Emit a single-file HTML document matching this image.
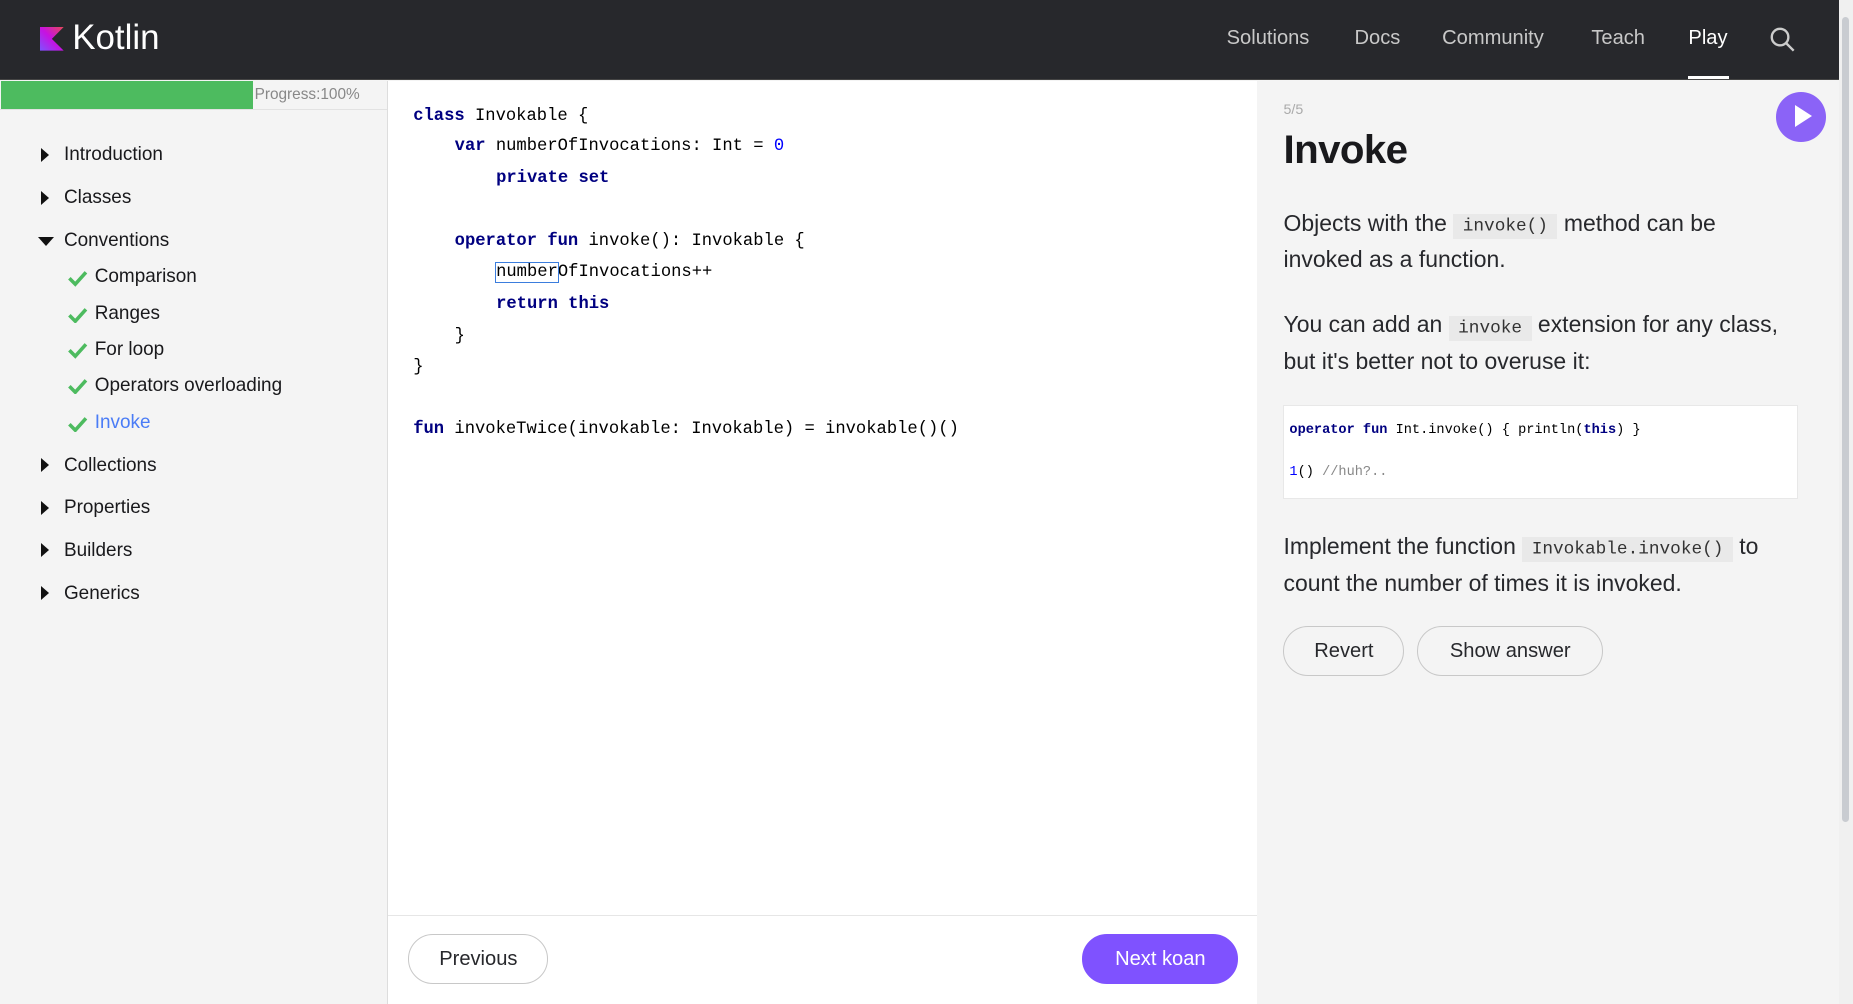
<!DOCTYPE html>
<html><head><meta charset="utf-8"><style>
html,body{margin:0;padding:0;overflow:hidden;background:#f4f4f4}
#z{zoom:1.18403;width:1565px;height:848px;position:relative;font-family:"Liberation Sans",sans-serif;overflow:hidden}
.a{position:absolute;white-space:pre}
.hdr{left:0;top:0;width:1553px;height:67px;background:#27282c;border-bottom:1px solid #444}
.nav{top:23px;font-size:17px;color:#c8c8c8}
.side{left:0;top:68px;width:327px;height:780px;background:#f4f4f4;border-right:1px solid #ddd}
.ti{font-size:16px;color:#19191c;left:54px}
.tri{left:35px;width:0;height:0;border-top:6px solid transparent;border-bottom:6px solid transparent;border-left:7px solid #111}
.ci{font-size:16px;color:#19191c;left:80px}
.code{font-family:"Liberation Mono",monospace;font-size:14.5px;color:#000;left:349px}
.k{color:#000080;font-weight:bold}
.p{font-size:19.4px;color:#27282c;left:1084px}
.ic{font-family:"Liberation Mono",monospace;font-size:15px;background:#e9e9e9;padding:2px 8px;color:#333}
.btn{border:1px solid #c8c8c8;border-radius:21px;height:40px;line-height:40px;text-align:center;font-size:17px;color:#27282c;box-sizing:border-box}
</style></head><body><div id="z">
<div class="a hdr"></div>
<svg class="a" style="left:34px;top:23px" width="20" height="20" viewBox="0 0 20 20"><defs><linearGradient id="g" x1="0" y1="1" x2="1" y2="0"><stop offset="0" stop-color="#7f52ff"/><stop offset=".5" stop-color="#c711e1"/><stop offset="1" stop-color="#e54857"/></linearGradient></defs><path d="M0 0H20L10 10L20 20H0Z" fill="url(#g)"/></svg>
<div class="a" style="left:61px;top:15px;font-size:29.5px;color:#fff">Kotlin</div>
<div class="a nav" style="left:1036px">Solutions</div>
<div class="a nav" style="left:1144px">Docs</div>
<div class="a nav" style="left:1218px">Community</div>
<div class="a nav" style="left:1344px">Teach</div>
<div class="a nav" style="left:1426px;color:#fff">Play</div>
<div class="a" style="left:1426px;top:64px;width:34px;height:3px;background:#fff"></div>
<svg class="a" style="left:1495px;top:23px" width="22" height="22" viewBox="0 0 22 22"><circle cx="8.5" cy="8.5" r="7" fill="none" stroke="#ccc" stroke-width="2"/><path d="M13.5 13.5L20 20" stroke="#ccc" stroke-width="2"/></svg>
<div class="a" style="left:1553px;top:0;width:12px;height:848px;background:#f0f0f0"></div>
<div class="a" style="left:1556px;top:14px;width:6px;height:680px;background:#c9ccd1;border-radius:3px"></div>

<div class="a side"></div>
<div class="a" style="left:1px;top:68px;width:213px;height:24px;background:#4dbb5f"></div>
<div class="a" style="left:215px;top:73px;font-size:13px;color:#888">Progress:100%</div>
<div class="a" style="left:0;top:92px;width:327px;height:1px;background:#e2e2e2"></div>

<div class="a tri" style="top:125px"></div><div class="a ti" style="top:122px">Introduction</div>
<div class="a tri" style="top:161px"></div><div class="a ti" style="top:158px">Classes</div>
<div class="a" style="left:32px;top:200px;width:0;height:0;border-left:7px solid transparent;border-right:7px solid transparent;border-top:8px solid #111"></div><div class="a ti" style="top:194px">Conventions</div>
<svg class="a" style="left:57px;top:228px" width="18" height="14"><path d="M2 7L7 12L16 2" fill="none" stroke="#4dbb5f" stroke-width="3"/></svg><div class="a ci" style="top:225px">Comparison</div>
<svg class="a" style="left:57px;top:259px" width="18" height="14"><path d="M2 7L7 12L16 2" fill="none" stroke="#4dbb5f" stroke-width="3"/></svg><div class="a ci" style="top:256px">Ranges</div>
<svg class="a" style="left:57px;top:289px" width="18" height="14"><path d="M2 7L7 12L16 2" fill="none" stroke="#4dbb5f" stroke-width="3"/></svg><div class="a ci" style="top:286px">For loop</div>
<svg class="a" style="left:57px;top:319px" width="18" height="14"><path d="M2 7L7 12L16 2" fill="none" stroke="#4dbb5f" stroke-width="3"/></svg><div class="a ci" style="top:317px">Operators overloading</div>
<svg class="a" style="left:57px;top:351px" width="18" height="14"><path d="M2 7L7 12L16 2" fill="none" stroke="#4dbb5f" stroke-width="3"/></svg><div class="a ci" style="top:348px;color:#4a7cf6">Invoke</div>
<div class="a tri" style="top:387px"></div><div class="a ti" style="top:384px">Collections</div>
<div class="a tri" style="top:423px"></div><div class="a ti" style="top:420px">Properties</div>
<div class="a tri" style="top:459px"></div><div class="a ti" style="top:456px">Builders</div>
<div class="a tri" style="top:495px"></div><div class="a ti" style="top:492px">Generics</div>

<div class="a" style="left:328px;top:68px;width:734px;height:780px;background:#fff"></div>
<div class="a code" style="top:90px"><span class="k">class</span> Invokable {</div>
<div class="a code" style="top:116px;left:384px"><span class="k">var</span> numberOfInvocations: Int = <span style="color:#00f">0</span></div>
<div class="a code" style="top:143px;left:419px"><span class="k">private set</span></div>
<div class="a code" style="top:196px;left:384px"><span class="k">operator fun</span> invoke(): Invokable {</div>
<div class="a code" style="top:222px;left:419px"><span style="outline:1px solid #3b7ddd">number</span>OfInvocations++</div>
<div class="a code" style="top:249px;left:419px"><span class="k">return this</span></div>
<div class="a code" style="top:276px;left:384px">}</div>
<div class="a code" style="top:302px">}</div>
<div class="a code" style="top:355px"><span class="k">fun</span> invokeTwice(invokable: Invokable) = invokable()()</div>
<div class="a" style="left:328px;top:773px;width:734px;height:1px;background:#e6e6e6"></div>
<div class="a btn" style="left:345px;top:789px;width:118px;height:42px;line-height:42px">Previous</div>
<div class="a btn" style="left:914px;top:789px;width:132px;height:42px;line-height:42px;background:#7f52ff;border-color:#7f52ff;color:#fff">Next koan</div>

<div class="a" style="left:1084px;top:86px;font-size:12px;color:#aaa">5/5</div>
<div class="a" style="left:1084px;top:107px;font-size:34px;font-weight:bold;color:#19191c;letter-spacing:-0.5px">Invoke</div>
<div class="a" style="left:1500px;top:78px;width:42px;height:42px;border-radius:50%;background:#8b63f7"></div>
<div class="a" style="left:1516px;top:89px;width:0;height:0;border-top:10px solid transparent;border-bottom:10px solid transparent;border-left:15px solid #fff"></div>
<div class="a p" style="top:177px">Objects with the <span class="ic">invoke()</span> method can be</div>
<div class="a p" style="top:208px">invoked as a function.</div>
<div class="a p" style="top:263px">You can add an <span class="ic">invoke</span> extension for any class,</div>
<div class="a p" style="top:294px">but it's better not to overuse it:</div>
<div class="a" style="left:1084px;top:342px;width:433px;height:78px;background:#fff;border:1px solid #e8e8e8"></div>
<div class="a" style="left:1089px;top:357px;font-family:'Liberation Mono',monospace;font-size:11.5px;color:#000"><span class="k">operator fun</span> Int.invoke() { println(<span class="k">this</span>) }</div>
<div class="a" style="left:1089px;top:393px;font-family:'Liberation Mono',monospace;font-size:11.5px;color:#888"><span style="color:#00f">1</span><span style="color:#000">()</span> //huh?..</div>
<div class="a p" style="top:450px">Implement the function <span class="ic">Invokable.invoke()</span> to</div>
<div class="a p" style="top:481px">count the number of times it is invoked.</div>
<div class="a btn" style="left:1084px;top:529px;width:102px;height:42px;line-height:42px">Revert</div>
<div class="a btn" style="left:1197px;top:529px;width:157px;height:42px;line-height:42px">Show answer</div>
</div></body></html>
